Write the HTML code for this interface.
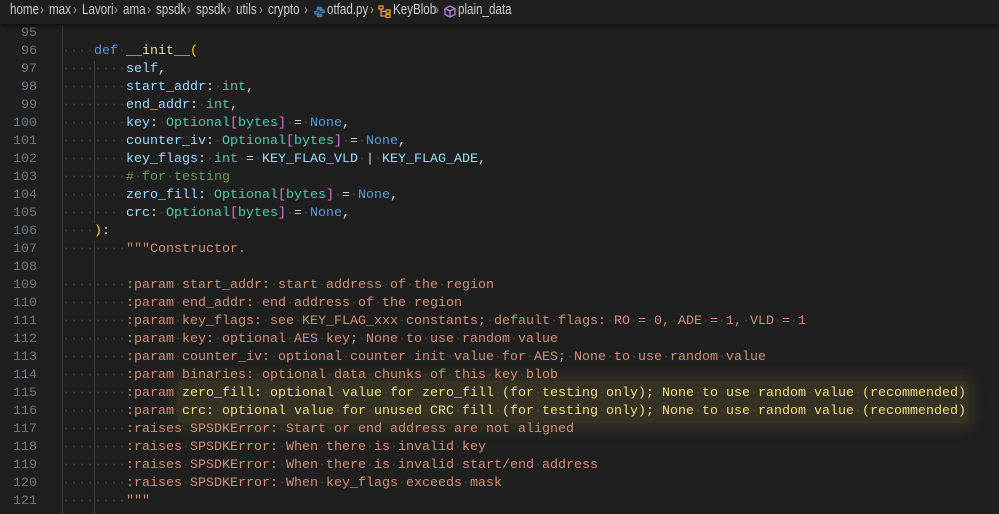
<!DOCTYPE html>
<html><head><meta charset="utf-8"><style>
body{margin:0;width:999px;height:514px;background:#1f1f1f;overflow:hidden;position:relative;font-family:"Liberation Mono",monospace}
.bc{position:absolute;top:0;left:0;width:999px;height:24px;background:#1f1f1f;box-shadow:0 2px 4px rgba(0,0,0,.6);z-index:3;font-family:"Liberation Sans",sans-serif;font-size:14.5px;color:#cccccc}
.bc span{position:absolute;top:2px;white-space:nowrap;transform:scaleX(0.8);transform-origin:0 0}
.bc .s{color:#a0a0a0}
.ln{position:absolute;left:0;width:37px;text-align:right;color:#6e7681;font-size:13.33px;line-height:18px}
.cl{position:absolute;left:62px;font-size:13.33px;line-height:18px;white-space:pre;color:#9cdcfe}
.d{color:#434343}
.k{color:#569cd6}.f{color:#dcdcaa}.t{color:#4ec9b0}.p{color:#ffd700}.pp{color:#da70d6}.o{color:#d4d4d4}.c{color:#6a9955}.s1{color:#ce9178}.y{color:#f2dc8a}
.g{position:absolute;width:1px;background:#3a3a3a}
.hl{position:absolute;left:178px;top:381px;width:790px;height:42px;background:rgba(200,180,60,.13);box-shadow:0 0 14px 6px rgba(200,180,60,.12);border-radius:4px}
</style></head><body>
<div class="bc">
<span style="left:10px">home</span><span class="s" style="left:40px">›</span>
<span style="left:49px">max</span><span class="s" style="left:73px">›</span>
<span style="left:82px">Lavori</span><span class="s" style="left:114px">›</span>
<span style="left:123px">ama</span><span class="s" style="left:147px">›</span>
<span style="left:156px">spsdk</span><span class="s" style="left:187px">›</span>
<span style="left:196px">spsdk</span><span class="s" style="left:227px">›</span>
<span style="left:236px">utils</span><span class="s" style="left:259px">›</span>
<span style="left:268px">crypto</span><span class="s" style="left:304px">›</span>
<span style="left:314px;top:6px;transform:none"><svg width="11" height="12" viewBox="0 0 11 12"><path d="M5 0.5C3 0.5 2.5 1.3 2.5 2.5V4H6V4.6H1.5C0.5 4.6 0 5.5 0 6.5S0.5 8.5 1.5 8.5H2.5V7C2.5 6 3.2 5.5 4 5.5H7C8 5.5 8.5 5 8.5 4V2.5C8.5 1.2 7.2 0.5 5 0.5Z" fill="#3c78aa"/><path d="M6 11.5C8 11.5 8.5 10.7 8.5 9.5V8H5V7.4H9.5C10.5 7.4 11 6.5 11 5.5S10.5 3.5 9.5 3.5H8.5V5C8.5 6 7.8 6.5 7 6.5H4C3 6.5 2.5 7 2.5 8V9.5C2.5 10.8 3.8 11.5 6 11.5Z" fill="#3c78aa"/></svg></span>
<span style="left:327px">otfad.py</span><span class="s" style="left:370px">›</span>
<span style="left:378px;top:5px;transform:none"><svg width="13" height="13" viewBox="0 0 13 13" fill="none" stroke="#ee9d28" stroke-width="1.3"><rect x="1" y="1" width="4" height="3"/><rect x="8" y="5" width="4" height="3"/><rect x="8" y="9.5" width="4" height="3"/><path d="M3 4V11H8M3 6.5H8"/></svg></span>
<span style="left:393px">KeyBlob</span><span class="s" style="left:435px">›</span>
<span style="left:444px;top:5px;transform:none"><svg width="12" height="13" viewBox="0 0 12 13" fill="none" stroke="#b180d7" stroke-width="1.3"><path d="M6 1L11 3.5V9.5L6 12L1 9.5V3.5Z M1 3.5L6 6L11 3.5M6 6V12"/></svg></span>
<span style="left:458px">plain_data</span>
</div>
<div class="g" style="left:62px;top:25px;height:489px"></div>
<div class="g" style="left:94px;top:61px;height:162px"></div>
<div class="g" style="left:94px;top:241px;height:273px"></div>
<div class="hl"></div>
<div id="code"></div>
<script>
var L=[
['95',''],
['96','    <span class="k">def</span> <span class="f">__init__</span><span class="p">(</span>'],
['97','        self<span class="o">,</span>'],
['98','        start_addr<span class="o">:</span> <span class="t">int</span><span class="o">,</span>'],
['99','        end_addr<span class="o">:</span> <span class="t">int</span><span class="o">,</span>'],
['100','        key<span class="o">:</span> <span class="t">Optional</span><span class="pp">[</span><span class="t">bytes</span><span class="pp">]</span> <span class="o">=</span> <span class="k">None</span><span class="o">,</span>'],
['101','        counter_iv<span class="o">:</span> <span class="t">Optional</span><span class="pp">[</span><span class="t">bytes</span><span class="pp">]</span> <span class="o">=</span> <span class="k">None</span><span class="o">,</span>'],
['102','        key_flags<span class="o">:</span> <span class="t">int</span> <span class="o">=</span> KEY_FLAG_VLD <span class="o">|</span> KEY_FLAG_ADE<span class="o">,</span>'],
['103','        <span class="c"># for testing</span>'],
['104','        zero_fill<span class="o">:</span> <span class="t">Optional</span><span class="pp">[</span><span class="t">bytes</span><span class="pp">]</span> <span class="o">=</span> <span class="k">None</span><span class="o">,</span>'],
['105','        crc<span class="o">:</span> <span class="t">Optional</span><span class="pp">[</span><span class="t">bytes</span><span class="pp">]</span> <span class="o">=</span> <span class="k">None</span><span class="o">,</span>'],
['106','    <span class="p">)</span><span class="o">:</span>'],
['107','        <span class="s1">"""Constructor.</span>'],
['108',''],
['109','        <span class="s1">:param start_addr: start address of the region</span>'],
['110','        <span class="s1">:param end_addr: end address of the region</span>'],
['111','        <span class="s1">:param key_flags: see KEY_FLAG_xxx constants; default flags: RO = 0, ADE = 1, VLD = 1</span>'],
['112','        <span class="s1">:param key: optional AES key; None to use random value</span>'],
['113','        <span class="s1">:param counter_iv: optional counter init value for AES; None to use random value</span>'],
['114','        <span class="s1">:param binaries: optional data chunks of this key blob</span>'],
['115','        <span class="s1">:param </span><span class="y">zero_fill: optional value for zero_fill (for testing only); None to use random value (recommended)</span>'],
['116','        <span class="s1">:param </span><span class="y">crc: optional value for unused CRC fill (for testing only); None to use random value (recommended)</span>'],
['117','        <span class="s1">:raises SPSDKError: Start or end address are not aligned</span>'],
['118','        <span class="s1">:raises SPSDKError: When there is invalid key</span>'],
['119','        <span class="s1">:raises SPSDKError: When there is invalid start/end address</span>'],
['120','        <span class="s1">:raises SPSDKError: When key_flags exceeds mask</span>'],
['121','        <span class="s1">"""</span>'],
['122','']
];
var h='';
L.forEach(function(l,i){var top=25+i*18;
var c=l[1].replace(/(^|>)([^<]*)/g,function(m,a,b){return a+b.replace(/ /g,'<span class="d">·</span>');});
h+='<div class="ln" style="top:'+top+'px">'+(l[0]=='122'?'':l[0])+'</div><div class="cl" style="top:'+top+'px">'+c+'</div>';});
document.getElementById('code').innerHTML=h;
</script>
</body></html>
